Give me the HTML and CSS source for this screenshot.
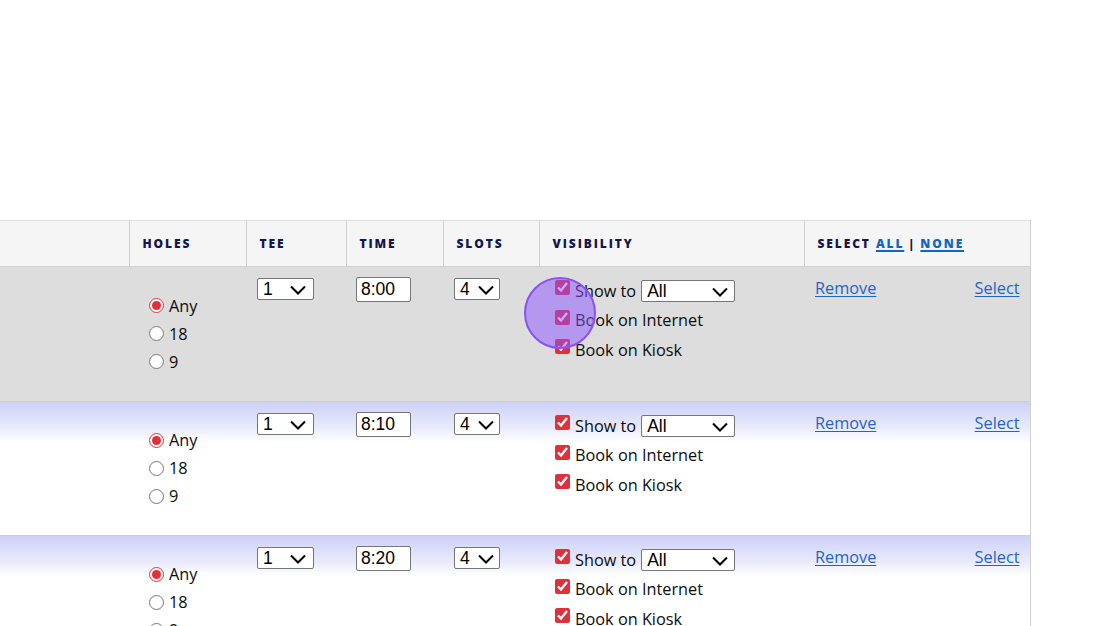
FILE: index.html
```html
<!DOCTYPE html>
<html>
<head>
<meta charset="utf-8">
<link rel="stylesheet" href="styles.css">
</head>
<body>
<div class="page">
  <table class="tees">
    <colgroup>
      <col class="c-first"><col class="c-holes"><col class="c-tee"><col class="c-time"><col class="c-slots"><col class="c-vis"><col class="c-sel">
    </colgroup>
    <thead>
      <tr>
        <th class="first"></th>
        <th>Holes</th>
        <th>Tee</th>
        <th>Time</th>
        <th>Slots</th>
        <th>Visibility</th>
        <th>Select <a href="#">All</a> <span class="sep">|</span> <a href="#">None</a></th>
      </tr>
    </thead>
    <tbody>
      <tr class="row gray">
        <td></td>
        <td class="holes">
          <label class="radio"><input type="radio" name="h1" checked> Any</label>
          <label class="radio"><input type="radio" name="h1"> 18</label>
          <label class="radio"><input type="radio" name="h1"> 9</label>
        </td>
        <td><span class="sel w-tee"><select><option>1</option></select><svg viewBox="0 0 16 10"><path d="M1 1.5 8 8.5 15 1.5"/></svg></span></td>
        <td><input class="time" type="text" value="8:00"></td>
        <td><span class="sel w-slots"><select><option>4</option></select><svg viewBox="0 0 16 10"><path d="M1 1.5 8 8.5 15 1.5"/></svg></span></td>
        <td class="vis">
          <label class="chk"><input type="checkbox" checked> Show to <span class="sel w-show"><select><option>All</option></select><svg viewBox="0 0 16 10"><path d="M1 1.5 8 8.5 15 1.5"/></svg></span></label>
          <label class="chk"><input type="checkbox" checked> Book on Internet</label>
          <label class="chk"><input type="checkbox" checked> Book on Kiosk</label>
        </td>
        <td class="actions"><a href="#">Remove</a><a href="#">Select</a></td>
      </tr>
      <tr class="row grad">
        <td></td>
        <td class="holes">
          <label class="radio"><input type="radio" name="h2" checked> Any</label>
          <label class="radio"><input type="radio" name="h2"> 18</label>
          <label class="radio"><input type="radio" name="h2"> 9</label>
        </td>
        <td><span class="sel w-tee"><select><option>1</option></select><svg viewBox="0 0 16 10"><path d="M1 1.5 8 8.5 15 1.5"/></svg></span></td>
        <td><input class="time" type="text" value="8:10"></td>
        <td><span class="sel w-slots"><select><option>4</option></select><svg viewBox="0 0 16 10"><path d="M1 1.5 8 8.5 15 1.5"/></svg></span></td>
        <td class="vis">
          <label class="chk"><input type="checkbox" checked> Show to <span class="sel w-show"><select><option>All</option></select><svg viewBox="0 0 16 10"><path d="M1 1.5 8 8.5 15 1.5"/></svg></span></label>
          <label class="chk"><input type="checkbox" checked> Book on Internet</label>
          <label class="chk"><input type="checkbox" checked> Book on Kiosk</label>
        </td>
        <td class="actions"><a href="#">Remove</a><a href="#">Select</a></td>
      </tr>
      <tr class="row grad">
        <td></td>
        <td class="holes">
          <label class="radio"><input type="radio" name="h3" checked> Any</label>
          <label class="radio"><input type="radio" name="h3"> 18</label>
          <label class="radio"><input type="radio" name="h3"> 9</label>
        </td>
        <td><span class="sel w-tee"><select><option>1</option></select><svg viewBox="0 0 16 10"><path d="M1 1.5 8 8.5 15 1.5"/></svg></span></td>
        <td><input class="time" type="text" value="8:20"></td>
        <td><span class="sel w-slots"><select><option>4</option></select><svg viewBox="0 0 16 10"><path d="M1 1.5 8 8.5 15 1.5"/></svg></span></td>
        <td class="vis">
          <label class="chk"><input type="checkbox" checked> Show to <span class="sel w-show"><select><option>All</option></select><svg viewBox="0 0 16 10"><path d="M1 1.5 8 8.5 15 1.5"/></svg></span></label>
          <label class="chk"><input type="checkbox" checked> Book on Internet</label>
          <label class="chk"><input type="checkbox" checked> Book on Kiosk</label>
        </td>
        <td class="actions"><a href="#">Remove</a><a href="#">Select</a></td>
      </tr>
    </tbody>
  </table>
  <div class="click-dot"></div>
</div>
</body>
</html>
```
FILE: styles.css
```css
html, body {
  margin: 0;
  padding: 0;
  background: #fff;
  overflow: hidden;
}
body {
  font-family: "Open Sans", "Noto Sans", sans-serif;
  font-size: 16.3px;
  color: #0c0c0c;
}
.page {
  position: relative;
  padding-top: 220px;
  width: 1120px;
  height: 406px;
}
.tees {
  border-collapse: collapse;
  table-layout: fixed;
  width: 1030px;
}
.c-first { width: 129px; }
.c-holes { width: 117px; }
.c-tee { width: 100px; }
.c-time { width: 97px; }
.c-slots { width: 96px; }
.c-vis { width: 265px; }
.c-sel { width: 226px; }

.tees th {
  height: 45px;
  padding: 0 0 0 13px;
  text-align: left;
  vertical-align: middle;
  background: #f5f5f5;
  border-top: 1px solid #dedede;
  border-bottom: 1px solid #cfcfcf;
  border-left: 1px solid #cfcfcf;
  font-size: 12px;
  font-weight: 800;
  letter-spacing: 1.9px;
  text-transform: uppercase;
  color: #15164d;
  white-space: nowrap;
}
.tees th.first { border-left: none; }
.tees th:last-child { border-right: 1px solid #cfcfcf; }
.tees th a {
  color: #1565c0;
  text-decoration: underline;
  text-decoration-thickness: 2px;
  text-underline-offset: 2px;
}
.tees th .sep { margin: 0 -1px; color: #15164d; }

.row { height: 134px; }
.row.gray { height: 135px; background: #dcdddc; }
.row td {
  padding: 9px 10px 10px 10px;
  vertical-align: top;
  border-bottom: 1px solid #cfcfcf;
}
.row td:last-child { border-right: 1px solid #cfcfcf; }
.row.grad { background: linear-gradient(to bottom, #cdd1f8 0px, #e9ebfc 26px, #ffffff 40px); }

.row td.holes {
  vertical-align: middle;
  padding: 9px 10px 10px 20px;
}
.radio {
  display: flex;
  align-items: center;
  height: 28px;
  line-height: 28px;
}
.radio input {
  margin: 0 5px 0 0;
  width: 15px;
  height: 15px;
  accent-color: #e0313b;
}

.sel {
  position: relative;
  display: inline-block;
  vertical-align: middle;
}
.sel select {
  appearance: none;
  -webkit-appearance: none;
  display: block;
  height: 22px;
  border: 1px solid #767676;
  border-radius: 2px;
  background: #fff;
  font-family: "Liberation Sans", Arial, sans-serif;
  font-size: 17.5px;
  color: #000;
  padding: 0 0 0 5px;
  margin: 0;
  line-height: 20px;
}
.sel svg {
  position: absolute;
  top: 7px;
  width: 16px;
  height: 10px;
  fill: none;
  stroke: #000;
  stroke-width: 2;
  pointer-events: none;
}
.w-tee select { width: 57px; }
.w-tee svg { right: 8px; }
.w-slots select { width: 46px; }
.w-slots svg { right: 6px; }
.w-show select { width: 94px; }
.w-show svg { right: 7px; }
.row td:nth-child(3), .row td:nth-child(5) { padding-left: 11px; }

.time {
  box-sizing: border-box;
  width: 55px;
  height: 25px;
  margin: 1px 0 0 0;
  border: 1px solid #767676;
  border-radius: 2px;
  padding: 0 0 0 4px;
  font-family: "Liberation Sans", Arial, sans-serif;
  font-size: 17.5px;
  color: #000;
  background: #fff;
}

.row td.vis { padding-left: 16px; padding-top: 9px; }
.chk {
  display: flex;
  align-items: center;
  height: 29.5px;
  white-space: nowrap;
}
.chk input {
  margin: 0 5px 0 0;
  width: 15px;
  height: 15px;
  accent-color: #e0313b;
  position: relative;
  top: -3px;
}
.chk .sel { margin-left: 5px; }

.row td.actions { padding-left: 11px; padding-top: 10px; }
.actions {
  white-space: nowrap;
}
.actions a {
  color: #1f65c6;
  text-decoration: underline;
  text-underline-offset: 2px;
}
.actions a + a { float: right; }

.click-dot {
  position: absolute;
  left: 524px;
  top: 277px;
  width: 68px;
  height: 68px;
  border-radius: 50%;
  background: rgba(140, 82, 255, 0.5);
  border: 2px solid #8a52f5;
}
```
